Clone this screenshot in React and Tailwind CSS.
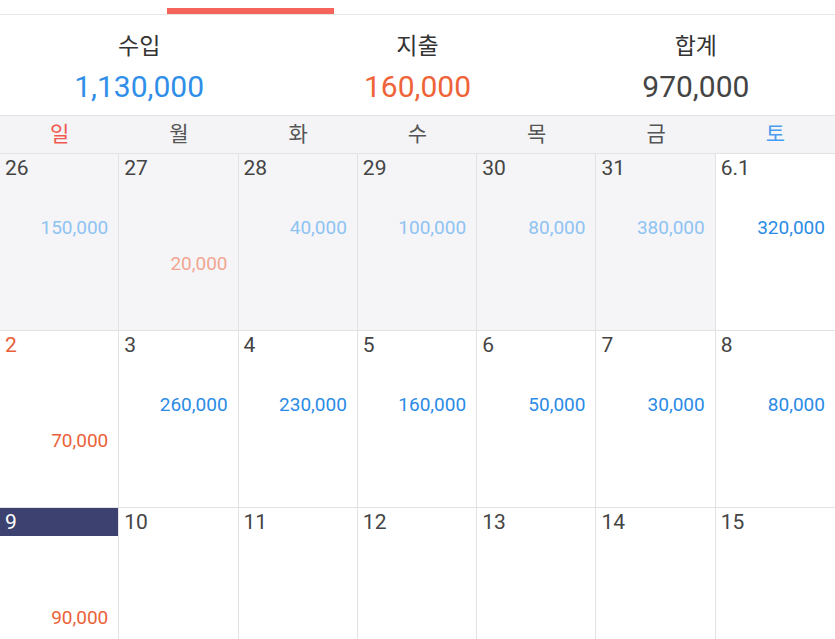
const days = ['일', '월', '화', '수', '목', '금', '토'];

const weeks = [
  [
    { d: '26', inc: '150,000', prev: true },
    { d: '27', exp: '20,000', prev: true },
    { d: '28', inc: '40,000', prev: true },
    { d: '29', inc: '100,000', prev: true },
    { d: '30', inc: '80,000', prev: true },
    { d: '31', inc: '380,000', prev: true },
    { d: '6.1', inc: '320,000' },
  ],
  [
    { d: '2', exp: '70,000', sun: true },
    { d: '3', inc: '260,000' },
    { d: '4', inc: '230,000' },
    { d: '5', inc: '160,000' },
    { d: '6', inc: '50,000' },
    { d: '7', inc: '30,000' },
    { d: '8', inc: '80,000' },
  ],
  [
    { d: '9', exp: '90,000', today: true },
    { d: '10' },
    { d: '11' },
    { d: '12' },
    { d: '13' },
    { d: '14' },
    { d: '15' },
  ],
];

function DayCell({ cell, last }) {
  const dateColor = cell.today ? 'text-white' : cell.sun ? 'text-[#e8603a]' : 'text-[#444]';
  return (
    <div
      className={`h-[177px] border-t border-[#e2e2e4] ${last ? '' : 'border-r'} ${
        cell.prev ? 'bg-[#f5f5f8]' : 'bg-white'
      }`}
    >
      <div
        className={`h-[28px] pl-[5px] text-[21px] leading-[29px] ${dateColor} ${
          cell.today ? 'bg-[#3d416f]' : ''
        }`}
      >
        {cell.d}
      </div>
      <div
        className={`mt-[34px] h-[22px] pr-[10px] text-right text-[19px] leading-[23px] ${
          cell.prev ? 'text-[#8ec3f2]' : 'text-[#2a8be6]'
        }`}
      >
        {cell.inc}
      </div>
      <div
        className={`mt-[14px] h-[22px] pr-[10px] text-right text-[19px] leading-[23px] ${
          cell.prev ? 'text-[#f3a591]' : 'text-[#ec6238]'
        }`}
      >
        {cell.exp}
      </div>
    </div>
  );
}

export default function App() {
  return (
    <div
      className="w-[835px] h-[639px] overflow-hidden bg-white"
      style={{ fontFamily: 'Roboto, "Noto Sans CJK KR", sans-serif' }}
    >
      {/* tab indicator */}
      <div className="h-[15px] border-b border-[#e6e6e6] pt-[8px] pl-[167px]">
        <div className="h-[6px] w-[167px] bg-[#f4645a]" />
      </div>

      {/* summary */}
      <div className="grid grid-cols-3 h-[100px]">
        <div className="flex flex-col items-center pt-[17px]">
          <span className="text-[23px] leading-[30px] text-[#333]">수입</span>
          <span className="mt-[5px] text-[30px] leading-[40px] text-[#2f8ee8]">1,130,000</span>
        </div>
        <div className="flex flex-col items-center pt-[17px]">
          <span className="text-[23px] leading-[30px] text-[#333]">지출</span>
          <span className="mt-[5px] text-[30px] leading-[40px] text-[#ef6339]">160,000</span>
        </div>
        <div className="flex flex-col items-center pt-[17px]">
          <span className="text-[23px] leading-[30px] text-[#333]">합계</span>
          <span className="mt-[5px] text-[30px] leading-[40px] text-[#444]">970,000</span>
        </div>
      </div>

      {/* weekdays */}
      <div className="grid grid-cols-7 h-[38px] border-t border-[#e2e2e4] bg-[#f4f4f6]">
        {days.map((day, i) => (
          <div
            key={day}
            className={`flex items-center justify-center text-[21px] ${
              i === 0 ? 'text-[#f0584e]' : i === 6 ? 'text-[#4a9df0]' : 'text-[#555]'
            }`}
          >
            {day}
          </div>
        ))}
      </div>

      {/* calendar grid */}
      {weeks.map((week, wi) => (
        <div key={wi} className="grid grid-cols-7">
          {week.map((cell, ci) => (
            <DayCell key={ci} cell={cell} last={ci === 6} />
          ))}
        </div>
      ))}
    </div>
  );
}
